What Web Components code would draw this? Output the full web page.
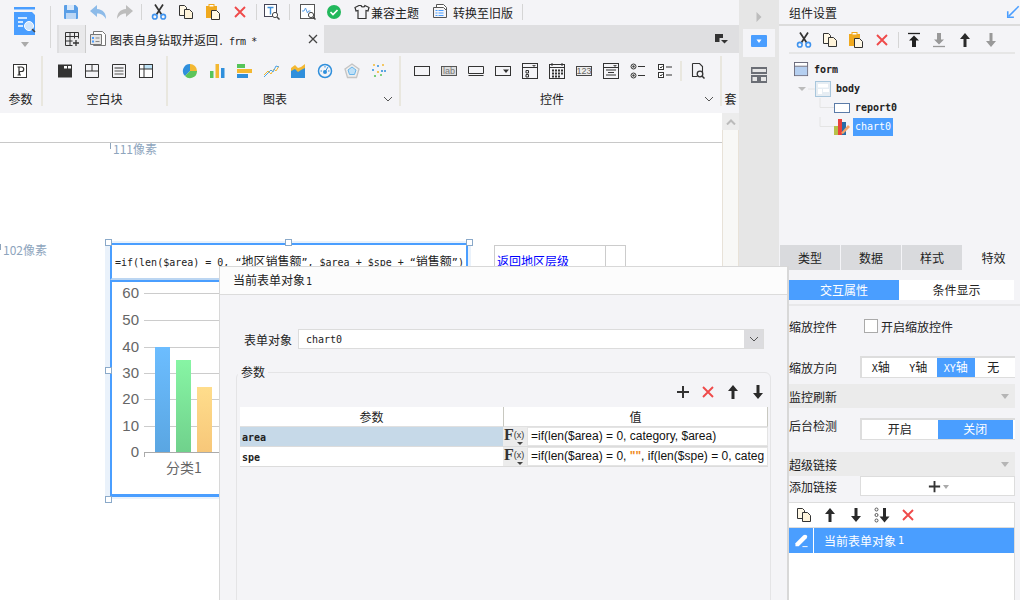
<!DOCTYPE html>
<html lang="zh">
<head>
<meta charset="utf-8">
<title>表单设计器</title>
<style>
html,body{margin:0;padding:0;background:#f4f4f7}
body{width:1020px;height:600px;overflow:hidden;font:12px "Noto Sans CJK SC","Liberation Sans",sans-serif;color:#222}
</style>
</head>
<body>
<fr-app></fr-app>
<script>
const ln='stroke="#333" fill="none"'
const MONO='10px "DejaVu Sans Mono","Liberation Mono",monospace'
const ICONS = {
  save:'<path d="M1 2a1 1 0 0 1 1-1h10.5L15 3.5V14a1 1 0 0 1-1 1H2a1 1 0 0 1-1-1z" fill="#5b9fe6"/><rect x="4" y="1" width="7" height="5" fill="#d8e8fa"/><rect x="3" y="9" width="10" height="6" fill="#bcd7f5"/>',
  undo:'<path d="M7 1 0 7l7 6V9.500c4 0 6.500 1.500 9 5.500 0-6-3-9.500-9-10z" fill="#8dbbe9"/>',
  redo:'<path d="M9 1l7 6-7 6V9.500c-4 0-6.500 1.500-9 5.500 0-6 3-9.500 9-10z" fill="#bdbdbd"/>',
  cut:'<path d="M4 .5l6.5 10M12 .5 5.500 10.500" stroke="#333" stroke-width="1.700" fill="none"/><circle cx="3.800" cy="12.700" r="2.300" fill="none" stroke="#3f93ee" stroke-width="1.600"/><circle cx="12.200" cy="12.700" r="2.300" fill="none" stroke="#3f93ee" stroke-width="1.600"/>',
  copy:'<path d="M1.500 1.500h5l2 2v8h-7z" fill="#fff8e6" stroke="#333"/><path d="M6.500 5.500h5l3 3v6h-8z" fill="#fff4da" stroke="#333"/>',
  paste:'<rect x="1" y="2" width="11" height="12" fill="#f0a91e"/><rect x="4" y=".5" width="5" height="2.500" fill="#fff" stroke="#f0a91e"/><path d="M6.500 6.500h5l3 3v6h-8z" fill="#fff8e6" stroke="#333"/>',
  del:'<path d="M3 3l10 10M13 3 3 13" stroke="#ef4a4a" stroke-width="1.900" fill="none"/>',
  tsearch:'<rect x=".5" y=".5" width="12" height="12" fill="#fff" stroke="#445"/><path d="M3.500 3.500h6M6.500 3.500v7" stroke="#3f8fd8" stroke-width="1.400" fill="none"/><circle cx="11" cy="11" r="2.600" fill="#fff" stroke="#444"/><path d="M13 13l2.500 2.500" stroke="#444" stroke-width="1.500"/>',
  preview:'<rect x=".5" y=".5" width="14" height="14" fill="#fff" stroke="#555"/><path d="M2 7h2l1.500-3 2 5 1-2h2" stroke="#5b9fe6" fill="none"/><circle cx="11" cy="11" r="2.600" fill="#fff" stroke="#444"/><path d="M13 13l2.500 2.500" stroke="#444" stroke-width="1.500"/>',
  check:'<circle cx="8" cy="8" r="7" fill="#22b85c"/><path d="M4.500 8l2.500 2.500 4.500-4.500" stroke="#fff" stroke-width="1.700" fill="none"/>',
  shirt:'<path d="M5 1.500 1 3.500l1 3.500 2-.5v8h8v-8l2 .5 1-3.500-4-2c-.5 2-3.500 2-4 0z" '+ln+' stroke-width="1.200"/>',
  convert:'<path d="M3.500 .5h7l3 3v9h-10z" fill="#fff" stroke="#555"/><path d="M.5 3.500h10l3 3v7h-13z" fill="#f4f4f7" stroke="#555"/><path d="M2.500 6.500h2M5.500 6.500h5M2.500 9h2M5.500 9h5M2.500 11.500h2M5.500 11.500h5" stroke="#4a9eff"/>',
  gridplus:'<path d="M1.500 1.500h13v6M1.500 1.500v13h7M1.500 5.500h13M1.500 10h7M6 1.500v13M10.500 1.500v6" '+ln+'/><path d="M12 9v6M9 12h6" '+ln+' stroke-width="1.300"/>',
  tabform:'<path d="M3.500 .5h9l3 3v11h-12z" fill="#fff" stroke="#777"/><path d="M.5 3.500h11v10H.5z" fill="#e6e6e6" stroke="#777"/><path d="M2 6h2v2H2zM2 9.500h2v2H2z" fill="#4a9eff"/><path d="M5.500 7h4M5.500 10.500h4" stroke="#888"/>',
  close:'<path d="M4 4l8 8M12 4l-8 8" stroke="#444" stroke-width="1.300" fill="none"/>',
  dock:'<path d="M2 3h8v4H6.500v4H2z" fill="#333"/><path d="M8 9h7l-3.500 3.500z" fill="#333"/>',
  param:'<rect x="1.500" y="1.500" width="13" height="13" fill="#fff" stroke="#333"/><path d="M5.500 4h4a2 2 0 0 1 0 4.500H7.500V12M7 4v8M5.500 12H9" stroke="#333" stroke-width="1.200" fill="none"/>',
  b1:'<rect x="1" y="1.500" width="14" height="13" fill="#333"/><rect x="7" y="3" width="3" height="2.500" fill="#fff"/><rect x="11" y="3" width="3" height="2.500" fill="#fff"/>',
  b2:'<path d="M1.500 1.500h13v13h-13zM1.500 8h13M8 1.500V8" '+ln+'/>',
  b3:'<path d="M1.500 1.500h13v13h-13zM3.500 5h9" '+ln+'/><path d="M3.500 8h9M3.500 11h9" stroke="#888" stroke-width="1.500"/>',
  b4:'<rect x="1.500" y="1.500" width="13" height="13" fill="#fff" stroke="#333"/><path d="M6 2h8v4H6z" fill="#bfe3f7"/><path d="M1.500 6h13M6 1.500v13" '+ln+'/>',
  pie:'<path d="M8 8V1a7 7 0 0 1 7 7z" fill="#f3b832"/><path d="M8 8V1a7 7 0 0 0-5 12z" fill="#2f8fdc"/><path d="M8 8h7a7 7 0 0 1-12 5z" fill="#5cc45a"/>',
  bars:'<rect x="1" y="8" width="3.500" height="7" fill="#56c45a"/><rect x="6.500" y="1" width="3.500" height="14" fill="#f3b832"/><rect x="12" y="5" width="3.500" height="10" fill="#2f8fdc"/>',
  hbars:'<rect x="1" y="1" width="8" height="4" fill="#56c45a"/><rect x="1" y="6" width="15" height="4" fill="#f3b832"/><rect x="1" y="11" width="11" height="4" fill="#2f8fdc"/>',
  lines:'<path d="M1 12 5 8l3 3 3-5 2 2 3-5" stroke="#f3b832" fill="none"/><path d="M1 14 5 10l3-3 2 2 3-6 3 1" stroke="#4aa3e8" fill="none"/>',
  area:'<path d="M1 15V5l4-3 3 3 3-1 4-3v14z" fill="#f3b832"/><path d="M1 15V8l4-2 3 3 3-2 4-2v10z" fill="#2f8fdc"/>',
  gauge:'<circle cx="8" cy="8" r="6.500" fill="none" stroke="#2f8fdc" stroke-width="1.500"/><circle cx="8" cy="9" r="2" fill="#2f8fdc"/><path d="M8 9l3-5M3.500 8h1.500M11 8h1.500M8 3v1.500" stroke="#2f8fdc" fill="none"/>',
  radar:'<path d="M8 1l7 5-2.500 8.500h-9L1 6z" fill="#eee" stroke="#c4c4c4" stroke-width="1.300"/><path d="M8 4l4 3-1.500 4.500h-5L4 7z" fill="#bfe0f7" stroke="#68b5ea"/>',
  scatter:'<g fill="#2f8fdc"><circle cx="7" cy="3" r="1"/><circle cx="11" cy="8" r="1.100"/><circle cx="2" cy="7" r="1"/><circle cx="14" cy="8" r="1"/></g><g fill="#f3b832"><circle cx="12" cy="2" r="1"/><circle cx="3" cy="2" r="1"/><circle cx="7" cy="9" r="1.100"/></g><g fill="#5cc45a"><circle cx="4" cy="13" r="1.100"/><circle cx="10" cy="12" r="1"/></g>',
  c1:'<rect x=".5" y="3.500" width="15" height="9" fill="none" stroke="#333"/>',
  c2:'<rect x=".5" y="3.500" width="15" height="9" fill="#ddd" stroke="#555"/><text x="8" y="11" font-size="9" font-family="Liberation Sans" text-anchor="middle" fill="#777">lab</text>',
  c3:'<path d="M.5 3.500h15v7H.5zM.5 12.500h15" '+ln+'/>',
  c4:'<rect x=".5" y="3.500" width="15" height="9" fill="none" stroke="#333"/><path d="M8 6.500h6l-3 3.500z" fill="#333"/>',
  c5:'<rect x=".5" y=".5" width="15" height="15" fill="none" stroke="#333"/><path d="M.5 4.500h15" stroke="#333"/><path d="M10 2h4l-2 2z" fill="#555"/><path d="M4 7.500h2.500V10H4zM4 11.500h2.500V14H4z" '+ln+'/>',
  c6:'<rect x=".5" y="1.500" width="15" height="14" fill="none" stroke="#333"/><path d="M.5 4.500h15" stroke="#333"/><path d="M3 0v3M13 0v3" stroke="#333"/><g fill="#333"><rect x="3" y="6.500" width="2" height="2"/><rect x="6" y="6.500" width="2" height="2"/><rect x="9" y="6.500" width="2" height="2"/><rect x="12" y="6.500" width="2" height="2"/><rect x="3" y="9.500" width="2" height="2"/><rect x="6" y="9.500" width="2" height="2"/><rect x="9" y="9.500" width="2" height="2"/><rect x="12" y="9.500" width="2" height="2"/><rect x="3" y="12.500" width="2" height="2"/><rect x="6" y="12.500" width="2" height="2"/><rect x="9" y="12.500" width="2" height="2"/></g>',
  c7:'<rect x=".5" y="3.500" width="15" height="9" fill="#eee" stroke="#444"/><text x="8" y="11" font-size="9" font-family="Liberation Sans" text-anchor="middle" fill="#666">123</text>',
  c8:'<rect x=".5" y=".5" width="15" height="15" fill="none" stroke="#333"/><path d="M.5 4.500h15" stroke="#333"/><path d="M10 2h4l-2 2z" fill="#555"/><path d="M3 7h10M5 9.500h6M3 12h10" '+ln+'/>',
  c9:'<circle cx="3.500" cy="3.500" r="2.500" fill="#fff" stroke="#333"/><circle cx="3.500" cy="3.500" r="1.200" fill="#444"/><circle cx="3.500" cy="12.500" r="2.500" fill="#fff" stroke="#333"/><circle cx="3.500" cy="12.500" r="1.200" fill="#444"/><path d="M8 3.500h7M8 12.500h7" '+ln+'/>',
  c10:'<rect x="1.500" y="1.500" width="5" height="5" fill="#fff" stroke="#333"/><rect x="1.500" y="9.500" width="5" height="5" fill="#fff" stroke="#333"/><path d="M3 4l1 1 1.500-2M3 12l1 1 1.500-2" stroke="#333" fill="none"/><path d="M9 4h6M9 12h6" '+ln+'/>',
  c11:'<path d="M2.500 .5h7l3 3v6M2.500 .5v13h5" '+ln+' stroke-width="1.100"/><circle cx="10" cy="11" r="2.800" fill="none" stroke="#333" stroke-width="1.300"/><path d="M12 13l2.500 2.500" stroke="#333" stroke-width="1.500"/>',
  right:'<path d="M5.500 3l5 5-5 5z" fill="#bcbcbc"/>',
  widget:'<rect width="16" height="12" rx="1" fill="#4a9eff"/><path d="M5.500 4.500h5L8 8z" fill="#fff"/>',
  layout:'<path d="M.5 1h15.500v5H.5zM.5 9h6.500v6H.5zM9 9h7v6H9z" fill="none" stroke="#6b6e75" stroke-width="2"/>',
  expand:'<path d="M14.500 1.500 3 13" stroke="#4a9eff" stroke-width="1.800"/><path d="M2 7v7h7" stroke="#4a9eff" stroke-width="1.800" fill="none"/>',
  totop:'<path d="M2 1.500h12" stroke="#222" stroke-width="1.300"/><path d="M8 3.500l5 5h-3V15H6V8.500H3z" fill="#222"/>',
  tobot:'<path d="M2 14.500h12" stroke="#999" stroke-width="1.300"/><path d="M8 12.500l5-5h-3V1H6v6.500H3z" fill="#999"/>',
  up:'<path d="M8 1l5 6h-3.500v8h-3V7H3z" fill="#2a2a2a"/>',
  down:'<path d="M8 15l5-6h-3.500V1h-3v8H3z" fill="#2a2a2a"/>',
  downg:'<path d="M8 15l5-6h-3.500V1h-3v8H3z" fill="#999"/>',
  plus:'<path d="M8 2v12M2 8h12" stroke="#333" stroke-width="2" fill="none"/>',
  dotdown:'<circle cx="2.500" cy="2.500" r="1.500" fill="none" stroke="#555"/><circle cx="2.500" cy="8" r="1.500" fill="none" stroke="#555"/><circle cx="2.500" cy="13.500" r="1.500" fill="none" stroke="#555"/><path d="M10.500 15.500l5-6h-3.500V1h-3v8.500H5.500z" fill="#2a2a2a"/>',
  pencil:'<path d="M1.500 11 10 2.500c1-1 2.500-1 3.500 0s.6 2.200 0 3L5 14H1.500z" fill="#fff"/><path d="M9 14.500h5.500" stroke="#fff"/>',
  tform:'<rect x=".5" y=".5" width="14" height="14" fill="#fff" stroke="#667"/><rect x="1" y="5" width="13" height="9" fill="#b5cff0"/><path d="M.5 4.500h14" stroke="#667"/>',
  tbody:'<rect x=".5" y=".5" width="15" height="15" fill="#e6edf3" stroke="#a8c6dc"/><rect x="3" y="3" width="10" height="3.500" fill="#fff"/><rect x="3" y="8" width="4" height="5" fill="#fff"/><rect x="8" y="8" width="6" height="3" fill="#fff"/>',
  treport:'<rect x=".5" y="3.500" width="15" height="9" fill="#fff" stroke="#5b7ba8"/>',
  tchart:'<rect x="0" y="7" width="5" height="9" fill="#b6c24a"/><rect x="4" y="0" width="4" height="16" fill="#e9413c"/><rect x="8" y="3" width="4" height="13" fill="#2a6da8"/><path d="M7 14l7-8 2 2-7 7z" fill="#f4a46a"/>'
}
class FrIc extends HTMLElement {
  constructor(){
    super()
    this.attachShadow({mode:'open'})
  }
  connectedCallback(){
    const s = this.getAttribute('size') || 16
    this.shadowRoot.innerHTML = `<style>:host{display:inline-flex;width:${s}px;height:${s}px;flex:none}svg{display:block}</style>
    <svg width="${s}" height="${s}" viewBox="0 0 16 16">${ICONS[this.getAttribute('name')]||''}</svg>`
  }
}
customElements.define('fr-ic', FrIc)

const cells = (list,w)=>list.map(n=>`<span class="c" style="width:${w}px"><fr-ic name="${n}"></fr-ic></span>`).join('')

class FrHeader extends HTMLElement {
  constructor(){
    super()
    this.attachShadow({mode:'open'}).innerHTML = `<style>
    :host{display:grid;grid-template-columns:57px 1fr;grid-template-rows:25px 28px;background:#f4f4f7}
    .logo{grid-row:1/3;position:relative;display:flex;flex-direction:column;align-items:center;width:50px;height:42px;margin-top:6px;border-right:1px solid #d8d8d8}
    .logo svg{margin-top:1px}
    .tri{width:0;height:0;border:4px solid transparent;border-top:5px solid #aaa;border-bottom:0;margin-top:7px}
    .q{display:flex;align-items:center;height:24px;white-space:nowrap}
    .c{display:inline-flex;justify-content:center;align-items:center;flex:none}
    .s{width:1px;height:16px;background:#d5d5d5;flex:none}
    .t{font-size:12px;margin-left:2px}
    .tabs{display:flex;background:#dfdfe1;padding-left:2px;align-items:stretch}
    .add{width:26px;background:#e9e9eb;display:flex;align-items:center;justify-content:center}
    .tab{width:239px;background:#f4f4f7;border-left:1px solid #ccc;display:flex;align-items:center;padding-left:4px;box-sizing:border-box}
    .tab b{font-weight:400;margin-left:4px;flex:1}
    .m{font:${MONO};letter-spacing:-.5px}
    .tab fr-ic{flex:none}
    .tab fr-ic:last-child{margin-right:3px}
    .dock{margin-left:auto;margin-right:10px;align-self:center}
    </style>
    <div class="logo">
      <svg width="22" height="28" viewBox="0 0 22 28"><rect x="0" y="0" width="21" height="2.500" fill="#4a9eff"/><path d="M0 5h18l3 3v20H0z" fill="#4a9eff"/><path d="M4 11h9M4 15h5M4 19h5" stroke="#fff" stroke-width="1.500"/><circle cx="15" cy="19" r="4.500" fill="#cfe4fb" stroke="#fff"/><path d="M18 22l3 3" stroke="#444" stroke-width="1.600"/></svg>
      <i class="tri"></i>
    </div>
    <div class="q">
      ${cells(['save','undo','redo'],27)}
      <span class="c" style="width:7px"><span class="s"></span></span>
      ${cells(['cut','copy','paste','del'],27)}
      <span class="c" style="width:7px"><span class="s"></span></span>
      ${cells(['tsearch'],23)}
      <span class="c" style="width:12px"><span class="s"></span></span>
      ${cells(['preview'],25)}
      ${cells(['check'],27)}
      <span class="c" style="width:29px"><fr-ic name="shirt"></fr-ic></span>
      <span class="t" style="margin-left:-5px">兼容主题</span>
      <span class="c" style="width:44px"><fr-ic name="convert"></fr-ic></span>
      <span class="t" style="margin-left:-10px">转换至旧版</span>
      <span class="c" style="width:18px"><span class="s"></span></span>
    </div>
    <div class="tabs">
      <span class="add"><fr-ic name="gridplus"></fr-ic></span>
      <span class="tab"><fr-ic name="tabform"></fr-ic><b>图表自身钻取并返回<span class="m">. frm *</span></b><fr-ic name="close"></fr-ic></span>
      <fr-ic class="dock" name="dock"></fr-ic>
    </div>`
  }
}
customElements.define('fr-header', FrHeader)

class FrSection extends HTMLElement {
  constructor(){ super(); this.attachShadow({mode:'open'}) }
  connectedCallback(){
    const w = this.getAttribute('w'), chev = this.hasAttribute('chev')
    this.shadowRoot.innerHTML = `<style>
    :host{display:flex;flex-direction:column;width:${w}px;height:50px;box-sizing:border-box;flex:none;${this.hasAttribute('last')?'':'border-right:2px solid #e9e7df;'}overflow:hidden}
    .i{height:30px;display:flex;align-items:center;padding-left:${this.getAttribute('pad')||0}px;white-space:nowrap}
    .l{height:20px;line-height:26px;display:flex;font-size:12px}
    .l span{flex:1;text-align:center}
    .l svg{margin:7px 5px 0 0}
    </style>
    <div class="i"><slot></slot></div>
    <div class="l"><span>${this.getAttribute('label')}</span>${chev?'<svg width="12" height="12" viewBox="0 0 12 12"><path d="M2 4l4 4 4-4" stroke="#555" fill="none"/></svg>':''}</div>`
  }
}
customElements.define('fr-section', FrSection)

class FrRibbon extends HTMLElement {
  constructor(){
    super()
    const ic = (list)=>list.map(n=>`<span style="display:inline-flex;width:27px;justify-content:center"><fr-ic name="${n}"></fr-ic></span>`).join('')
    this.attachShadow({mode:'open'}).innerHTML = `<style>
    :host{display:flex;height:60px;padding-top:3px;box-sizing:border-box;background:#f4f4f7}
    .sp{display:inline-block;width:2px;height:20px;background:#e9e7df;margin:0 2px 0 2px}
    </style>
    <fr-section w="43" pad="12" label="参数"><fr-ic name="param"></fr-ic></fr-section>
    <fr-section w="125" pad="8" label="空白块">${ic(['b1','b2','b3','b4'])}</fr-section>
    <fr-section w="233" pad="8" label="图表" chev>${ic(['pie','bars','hbars','lines','area','gauge','radar','scatter'])}</fr-section>
    <fr-section w="321" pad="7" label="控件" chev>${ic(['c1','c2','c3','c4','c5','c6','c7','c8','c9','c10'])}<span class="sp"></span>${ic(['c11'])}</fr-section>
    <fr-section w="17" pad="0" label="套" last></fr-section>`
  }
}
customElements.define('fr-ribbon', FrRibbon)

class FrChart extends HTMLElement {
  constructor(){
    super()
    const ys=[[60,293],[50,320],[40,347],[30,373],[20,399],[10,426],[0,452]]
    this.attachShadow({mode:'open'}).innerHTML = `<style>:host{display:block}svg{display:block}</style>
    <svg width="200" height="212" viewBox="112 282 200 212">
      <defs>
        <linearGradient id="a" x1="0" y1="0" x2="0" y2="1"><stop offset="0" stop-color="#6cbdff"/><stop offset="1" stop-color="#5aa6e2"/></linearGradient>
        <linearGradient id="b" x1="0" y1="0" x2="0" y2="1"><stop offset="0" stop-color="#87f5a4"/><stop offset="1" stop-color="#70d18c"/></linearGradient>
        <linearGradient id="d" x1="0" y1="0" x2="0" y2="1"><stop offset="0" stop-color="#ffdd8c"/><stop offset="1" stop-color="#f7c779"/></linearGradient>
      </defs>
      ${ys.map(([v,y])=>`<path d="M144 ${y+.5}H312" stroke="${v?'#ccc':'#aaa'}"/><text x="139" y="${y+5}" text-anchor="end" font-family="Liberation Sans" font-size="15" fill="#666">${v}</text>`).join('')}
      <path d="M144.500 452v5" stroke="#aaa"/>
      <rect x="155" y="347" width="15" height="105" fill="url(#a)"/>
      <rect x="176" y="360" width="15" height="92" fill="url(#b)"/>
      <rect x="197" y="387" width="15" height="65" fill="url(#d)"/>
      <text x="184" y="473" text-anchor="middle" font-family="Noto Sans CJK SC,sans-serif" font-size="14" fill="#666">分类1</text>
    </svg>`
  }
}
customElements.define('fr-chart', FrChart)

class FrCanvas extends HTMLElement {
  constructor(){
    super()
    const h=(x,y)=>`<i class="h" style="left:${x-3}px;top:${y-113-3}px"></i>`
    this.attachShadow({mode:'open'}).innerHTML = `<style>
    :host{display:flex;flex:1;min-height:0}
    .sf{position:relative;width:722px;background:#fff;overflow:hidden}
    .rule{position:absolute;left:0;right:0;top:29px;height:0;border-top:1px solid #c8c8c8}
    .px{position:absolute;color:#8ea5bd;font-size:12px;line-height:14px;white-space:nowrap}
    .px::before{content:"";position:absolute;left:-3px;top:1px;width:1px;height:6px;background:#8ea5bd}
    .halo{position:absolute;left:105px;top:128px;width:366px;height:258px;background:#eaf2fb}
    .f{position:absolute;left:110px;top:130px;width:358px;height:37px;box-sizing:border-box;border:2px solid #4a9eff;border-bottom:2px solid #bcd6f2;background:#fff;padding-left:3px;line-height:32px;white-space:nowrap;overflow:hidden}
    .m{font:${MONO}}
    .ch{position:absolute;left:110px;top:167px;width:358px;height:217px;box-sizing:border-box;border:2px solid #4a9eff;border-bottom:3px solid #4a9eff;background:#fff}
    .h{position:absolute;width:5px;height:5px;background:#fff;border:1px solid #8aa9c9}
    .link{position:absolute;left:494px;top:132px;width:132px;height:40px;box-sizing:border-box;border:1px solid #ccc;display:flex}
    .link a{flex:1;padding-left:2px;color:#00f;text-decoration:underline;line-height:29px;border-right:1px solid #ccc;white-space:nowrap;overflow:hidden}
    .link i{width:19px}
    .bar{width:17px;background:#f8f8f6;border-left:1px solid #e8e2d8;border-right:1px solid #e8e2d8;box-sizing:border-box}
    .btn{height:17px;margin:0 -1px;background:#ececec;display:flex;align-items:center;justify-content:center}
    </style>
    <div class="sf">
      <div class="rule"></div>
      <span class="px" style="left:113px;top:29px">111像素</span>
      <span class="px" style="left:3px;top:130px">102像素</span>
      <div class="halo"></div>
      <div class="f"><span class="m">=if(len($area) = 0, “</span>地区销售额<span class="m">”, $area + $spe + “</span>销售额<span class="m">”)</span></div>
      <div class="ch"><fr-chart></fr-chart></div>
      ${h(108,242)}${h(288,242)}${h(469,242)}${h(108,370)}${h(108,499)}
      <div class="link"><a>返回地区层级</a><i></i></div>
    </div>
    <div class="bar"><div class="btn"><svg width="10" height="6" viewBox="0 0 10 6"><path d="M1 5.500l4-4 4 4" stroke="#bbb" stroke-width="2" fill="none"/></svg></div></div>`
  }
}
customElements.define('fr-canvas', FrCanvas)

class FrRail extends HTMLElement {
  constructor(){
    super()
    this.attachShadow({mode:'open'}).innerHTML = `<style>
    :host{display:flex;flex-direction:column;align-items:center;width:40px;background:#e6e6e6;padding-top:9px;box-sizing:border-box}
    .on{width:32px;height:28px;margin-top:4px;background:#f4f4f7;display:flex;align-items:center;justify-content:center}
    .lay{margin-top:10px}
    </style>
    <fr-ic name="right" size="16"></fr-ic>
    <span class="on"><fr-ic name="widget"></fr-ic></span>
    <fr-ic class="lay" name="layout"></fr-ic>`
  }
}
customElements.define('fr-rail', FrRail)

class FrSeg extends HTMLElement {
  constructor(){ super(); this.attachShadow({mode:'open'}) }
  connectedCallback(){
    const w = this.getAttribute('w'), on = +this.getAttribute('on')
    const items = this.getAttribute('items').split('|')
    this.shadowRoot.innerHTML = `<style>
    :host{display:flex;box-sizing:border-box;width:155px;height:${this.getAttribute('h')||22}px;border:2px solid #ddd;border-right:0;border-bottom-width:1px;background:#fff}
    span{width:${w}px;text-align:center;font-size:12px;line-height:18px}
    .on{background:#4a9eff;color:#fff}
    .m{font:${MONO}}
    </style>${items.map((t,i)=>`<span class="${i===on?'on':''}">${t.replace(/^([XY]+)/,'<b class="m">$1</b>')}</span>`).join('')}`
  }
}
customElements.define('fr-seg', FrSeg)

class FrPanel extends HTMLElement {
  constructor(){
    super()
    const tb=(n,w)=>`<span class="c" style="width:${w}px"><fr-ic name="${n}"></fr-ic></span>`
    this.attachShadow({mode:'open'}).innerHTML = `<style>
    :host{display:flex;flex-direction:column;width:241px;height:600px;background:#f4f4f7;font-size:12px;overflow:hidden}
    .c{display:inline-flex;justify-content:center;align-items:center;flex:none}
    .ti{height:26px;box-sizing:border-box;border-bottom:2px solid #dcdcdc;display:flex;align-items:center;justify-content:space-between;padding:0 0 0 10px}
    .tools{height:24px;padding:2px 0 0 2px;margin:0 5px 0 10px;border-bottom:2px solid #e6e6e6;display:flex;align-items:center}
    .tools .s{width:1px;height:16px;background:#d5d5d5;margin:0 3px}
    .tree{height:191px;padding-top:6px;box-sizing:border-box;font:${MONO};font-weight:700}
    .r{height:19px;display:flex;align-items:center;white-space:nowrap}
    .r svg{flex:none}
    .r fr-ic{margin-right:5px}
    .sel{background:#4a9eff;color:#fff;padding:0 2px;margin-left:-2px;height:18px;line-height:18px;font-weight:400}
    .tabs{display:flex;gap:1px;height:25px;margin-left:1px}
    .tabs span{width:60px;background:#d9dadd;text-align:center;line-height:25px}
    .tabs .on{background:#f4f4f7;flex:1;padding-left:4px}
    .sub{display:flex;margin:10px 6px 0 10px;height:20px;background:#fff}
    .sub span{flex:1;text-align:center;line-height:20px}
    .sub .on{background:#4a9eff;color:#fff;flex:0 0 110px}
    .line{height:2px;background:#e8e8ea;margin:4px 0 0 10px}
    .row{display:flex;align-items:center;padding-left:10px}
    .row label{width:71px;flex:none}
    .cb{width:12px;height:12px;border:1px solid #aaa;background:#fff;margin-right:3px;flex:none}
    .hd{height:24px;margin-left:10px;margin-right:5px;background:#ebebeb;display:flex;align-items:center;justify-content:space-between;padding-right:6px}
    .hd i{width:0;height:0;border:4px solid transparent;border-top:5px solid #b5b5b5;border-bottom:0}
    .add{width:155px;height:20px;box-sizing:border-box;border:1px solid #ddd;background:#fff;display:flex;align-items:center;justify-content:center}
    .add i{width:0;height:0;border:3px solid transparent;border-top:4px solid #aaa;border-bottom:0;margin:2px 0 0 1px}
    .list{margin:6px 5px 0 10px;flex:1;background:#fff;border:1px solid #ddd;border-left:0;border-bottom:0}
    .lt{height:25px;box-sizing:border-box;border-bottom:1px solid #ddd;display:flex;align-items:center;padding-left:2px}
    .it{height:25px;background:#4a9eff;color:#fff;display:flex;align-items:center}
    .it .p{width:24px;height:25px;border-right:1px solid #fff;display:flex;align-items:center;justify-content:center;margin-right:10px;flex:none}
    .m{font:${MONO}}
    </style>
    <div class="ti"><span>组件设置</span><fr-ic name="expand" size="14"></fr-ic></div>
    <div class="tools">${tb('cut',26)}${tb('copy',26)}${tb('paste',25)}${tb('del',27)}<span class="s"></span>${tb('totop',24)}${tb('tobot',26)}${tb('up',26)}${tb('downg',26)}</div>
    <div class="tree">
      <div class="r" style="padding-left:15px"><fr-ic name="tform" size="15"></fr-ic>form</div>
      <div class="r" style="padding-left:18px"><svg width="18" height="16" viewBox="0 0 18 16"><path d="M1 6h8l-4 4z" fill="#bbb"/><path d="M11 8h7" stroke="#e4e4e4"/></svg><fr-ic name="tbody"></fr-ic>body</div>
      <div class="r" style="padding-left:40px"><svg width="15" height="19" viewBox="0 0 15 19"><path d="M1 0v9.500h14" stroke="#e4e4e4" fill="none"/></svg><fr-ic name="treport"></fr-ic>report0</div>
      <div class="r" style="padding-left:40px"><svg width="15" height="19" viewBox="0 0 15 19"><path d="M1 0v9.500h14" stroke="#e4e4e4" fill="none"/></svg><fr-ic name="tchart"></fr-ic><span class="sel">chart0</span></div>
    </div>
    <div class="tabs"><span>类型</span><span>数据</span><span>样式</span><span class="on">特效</span></div>
    <div class="sub"><span class="on">交互属性</span><span>条件显示</span></div>
    <div class="line"></div>
    <div class="row" style="height:20px;margin-top:10px"><label>缩放控件</label><i class="cb" style="margin-left:4px"></i>开启缩放控件</div>
    <div class="row" style="margin-top:20px"><label>缩放方向</label><fr-seg w="37.5" on="2" items="X轴|Y轴|XY轴|无"></fr-seg></div>
    <div class="hd" style="margin-top:6px"><span>监控刷新</span><i></i></div>
    <div class="row" style="margin-top:10px;align-items:flex-start;height:22px"><label style="line-height:16px">后台检测</label><fr-seg w="75.5" on="1" items="开启|关闭"></fr-seg></div>
    <div class="hd" style="margin-top:12px"><span>超级链接</span><i></i></div>
    <div class="row" style="height:20px"><label>添加链接</label><span class="add"><fr-ic name="plus" size="15"></fr-ic><i></i></span></div>
    <div class="list">
      <div class="lt">${tb('copy',26)}${tb('up',26)}${tb('down',26)}${tb('dotdown',26)}${tb('del',26)}</div>
      <div class="it"><span class="p"><fr-ic name="pencil" size="15"></fr-ic></span>当前表单对象<span class="m" style="margin-left:2px">1</span></div>
    </div>`
  }
}
customElements.define('fr-panel', FrPanel)

class FrDialog extends HTMLElement {
  constructor(){
    super()
    const tb=(n,w)=>`<span class="c" style="width:${w}px"><fr-ic name="${n}"></fr-ic></span>`
    const fx=`<span class="fx"><b>F</b><small>(x)</small><i></i></span>`
    this.attachShadow({mode:'open'}).innerHTML = `<style>
    :host{position:absolute;left:219px;top:266px;width:570px;height:334px;box-sizing:border-box;background:#f4f4f7;border:1px solid #d8d8d8;border-width:1px 2px 0 1px;overflow:hidden;font-size:12px}
    .hd{height:27px;line-height:26px;background:#fcfcfc;border-bottom:1px solid #dcdcdc;padding-left:13px}
    .m{font:${MONO}}
    .frm{display:flex;align-items:center;margin:34px 0 0 24px;height:20px}
    .frm label{width:54px;flex:none}
    .combo{width:466px;height:20px;box-sizing:border-box;background:#fff;border:1px solid #dcdcdc;display:flex;align-items:center;justify-content:space-between;padding-left:7px}
    .combo span.b{width:19px;height:18px;background:#dcdcdf;display:flex;align-items:center;justify-content:center}
    fieldset{margin:15px 0 0 16px;width:535px;height:300px;box-sizing:border-box;padding:0 3px 0 2px;border:1px solid #e4e4e6;border-radius:6px;min-width:0}
    legend{padding:0 3px;margin-left:-1px;line-height:16px}
    .ft{height:24px;margin-right:-3px;display:flex;justify-content:flex-end;align-items:center}
    .c{display:inline-flex;justify-content:center;align-items:center;flex:none}
    .grid{display:grid;grid-template-columns:263px 24px 241px;grid-auto-rows:20px;background:#fff;width:528px;margin:3px 0 0 1px}
    .th{background:#fff;text-align:center;line-height:20px;border-bottom:1px solid #e0e0e0;position:relative;box-sizing:border-box}
    .th.v{grid-column:2/4;border-left:1px solid #c8c8c0;border-right:1px solid #c8c8c0}
    .td{line-height:21px;padding-left:2px;border-bottom:1px solid #dcdcdc;box-sizing:border-box;font-weight:700}
    .sel{background:#c6d9e8}
    .fx{background:#ececec;border-bottom:1px solid #dcdcdc;box-sizing:border-box;position:relative;font:700 16px/15px "Liberation Serif",serif;padding-left:1px;white-space:nowrap;overflow:hidden}
    .fx b{color:#333}
    .fx small{font:400 9px "Liberation Sans",sans-serif;color:#333;vertical-align:2px}
    .fx i{position:absolute;right:4px;bottom:1px;width:0;height:0;border:3px solid transparent;border-top:3px solid #444;border-bottom:0}
    .val{background:#e4e4e4;padding:1px;box-sizing:border-box;border-bottom:1px solid #dcdcdc}
    .val span{display:block;background:#fff;height:17px;font:12px/16px "Liberation Sans",sans-serif;padding-left:3px;white-space:nowrap;overflow:hidden;color:#111}
    .q{color:#f08a1d;font-weight:700}
    </style>
    <div class="hd">当前表单对象<span class="m" style="margin-left:1px">1</span></div>
    <div class="frm"><label>表单对象</label><div class="combo"><span class="m">chart0</span><span class="b"><svg width="12" height="12" viewBox="0 0 12 12"><path d="M2 4l4 4 4-4" stroke="#555" fill="none"/></svg></span></div></div>
    <fieldset><legend>参数</legend>
      <div class="ft">${tb('plus',25)}${tb('del',25)}${tb('up',25)}${tb('down',25)}</div>
      <div class="grid">
        <div class="th">参数</div><div class="th v">值</div>
        <div class="td sel m">area</div>${fx}<div class="val"><span>=if(len($area) = 0, category, $area)</span></div>
        <div class="td m">spe</div>${fx}<div class="val"><span>=if(len($area) = 0, <b class="q">""</b>, if(len($spe) = 0, categ</span></div>
      </div>
    </fieldset>`
  }
}
customElements.define('fr-dialog', FrDialog)

class FrApp extends HTMLElement {
  constructor(){
    super()
    this.attachShadow({mode:'open'}).innerHTML = `<style>
    :host{display:grid;grid-template-columns:739px 40px 241px;width:1020px;height:600px;position:relative;overflow:hidden}
    .main{display:flex;flex-direction:column;height:600px;min-width:0}
    </style>
    <div class="main"><fr-header></fr-header><fr-ribbon></fr-ribbon><fr-canvas></fr-canvas></div>
    <fr-rail></fr-rail>
    <fr-panel></fr-panel>
    <fr-dialog></fr-dialog>`
  }
}
customElements.define('fr-app', FrApp)
</script>
</body>
</html>
